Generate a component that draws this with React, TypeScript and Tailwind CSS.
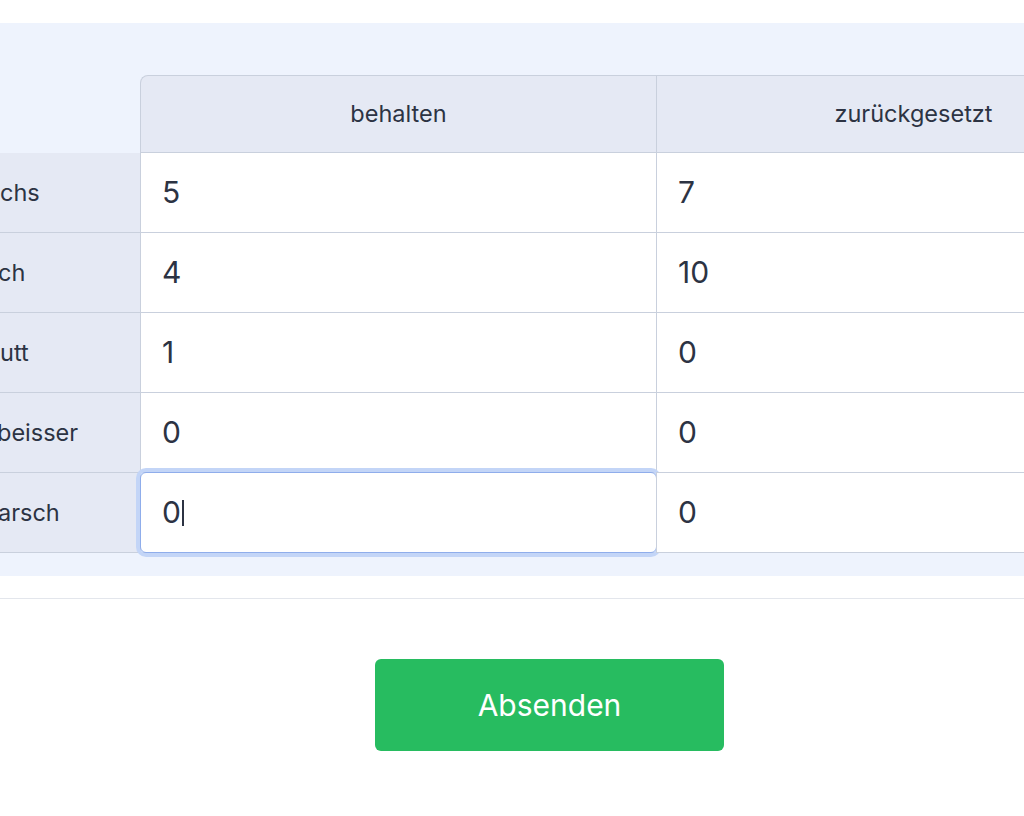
import React from 'react'

const rows = [
  { label: 'chs', kept: '5', reset: '7' },
  { label: 'ch', kept: '4', reset: '10' },
  { label: 'utt', kept: '1', reset: '0' },
  { label: 'beisser', kept: '0', reset: '0' },
  { label: 'arsch', kept: '0', reset: '0', focused: true },
]

function ValueCell({ value, focused, last }: { value: string; focused?: boolean; last?: boolean }) {
  return (
    <div
      className={`relative flex h-[80px] items-center border-l border-t border-[#c9d0dd] bg-white pl-[21px] text-[30px] text-[#2c3343] ${
        last ? 'h-[81px] border-b' : ''
      }`}
    >
      {focused && (
        <div className="absolute -inset-[1px] rounded-[6px] border-[1.5px] border-[#8fadeb] ring-[4px] ring-[#c3d5f7]" />
      )}
      <span className="relative">{value}</span>
      {focused && <span className="relative ml-[1px] h-[26px] w-[2px] bg-[#2c3343]" />}
    </div>
  )
}

export default function App() {
  return (
    <div
      className="h-[816px] w-[1024px] overflow-hidden bg-white"
      style={{ fontFamily: 'Inter, "Noto Sans", sans-serif' }}
    >
      <div className="w-[1170px]">
        <div className="mt-[23px] bg-[#eef3fd] pb-[23px] pt-[52px]">
          <div className="grid grid-cols-[140px_516px_514px]">
            {/* header */}
            <div />
            <div className="flex h-[77px] items-center justify-center rounded-tl-lg border-l border-t border-[#c9d0dd] bg-[#e5e9f4] text-[23.5px] text-[#2c3343]">
              behalten
            </div>
            <div className="flex h-[77px] items-center justify-center border-l border-t border-[#c9d0dd] bg-[#e5e9f4] text-[23.5px] text-[#2c3343]">
              zurückgesetzt
            </div>

            {rows.map((row, i) => (
              <React.Fragment key={i}>
                <div
                  className={`flex items-center bg-[#e5e9f4] bg-clip-padding text-[23.5px] text-[#2c3343] ${
                    i === 0 ? 'h-[80px] border-t border-transparent' : 'h-[80px] border-t border-[#c9d0dd]'
                  } ${i === rows.length - 1 ? 'h-[81px] border-b border-b-[#c9d0dd]' : ''}`}
                >
                  <span className={i === 3 ? '-ml-[3px]' : i === 1 || i === 4 ? '-ml-[2px]' : ''}>
                    {row.label}
                  </span>
                </div>
                <ValueCell value={row.kept} focused={row.focused} last={i === rows.length - 1} />
                <ValueCell value={row.reset} last={i === rows.length - 1} />
              </React.Fragment>
            ))}
          </div>
        </div>

        <div className="mt-[22px] border-t border-[#e3e6ec]" />

        <div className="flex w-[1099px] justify-center pt-[60px]">
          <button className="h-[92px] w-[349px] rounded-[6px] bg-[#27bc60] text-[30px] text-white">
            Absenden
          </button>
        </div>
      </div>
    </div>
  )
}
